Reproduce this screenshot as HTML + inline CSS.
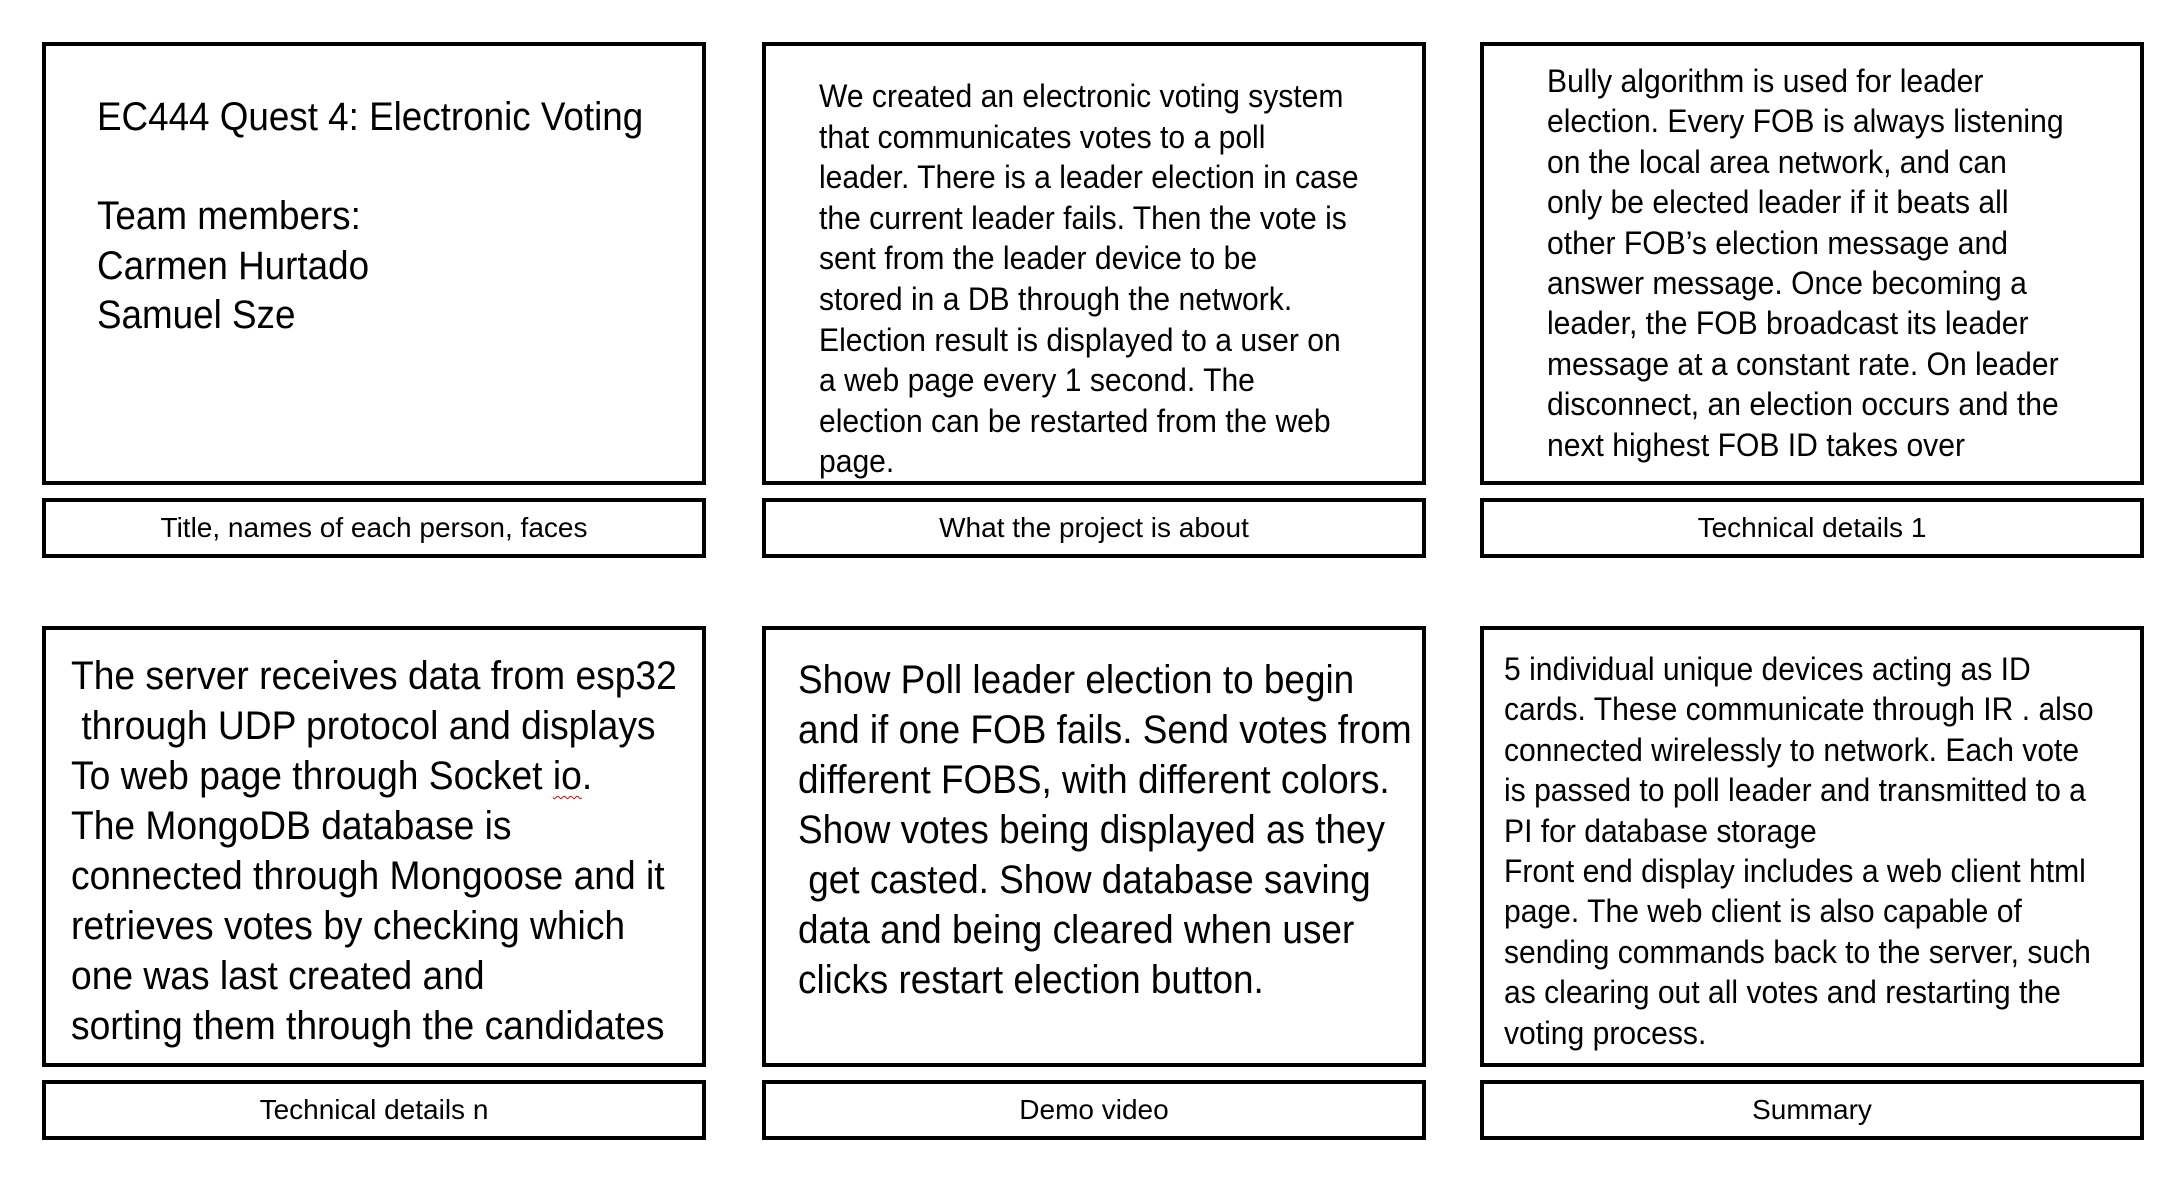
<!DOCTYPE html>
<html><head><meta charset="utf-8"><style>
html,body{margin:0;padding:0;background:#fff;}
body{width:2184px;height:1180px;position:relative;overflow:hidden;font-family:"Liberation Sans",sans-serif;color:#000;}
.b{position:absolute;border:4px solid #000;box-sizing:border-box;background:#fff;}
.t{position:absolute;white-space:pre;transform:scaleX(0.94);transform-origin:0 0;}
.l{position:absolute;text-align:center;font-size:28px;line-height:52px;}
.sq{text-decoration:underline wavy #d00;text-decoration-thickness:1px;text-underline-offset:6px;}
</style></head><body>
<div class="b" style="left:42px;top:42px;width:664px;height:443px"></div>
<div class="b" style="left:762px;top:42px;width:664px;height:443px"></div>
<div class="b" style="left:1480px;top:42px;width:664px;height:443px"></div>
<div class="b l" style="left:42px;top:498px;width:664px;height:60px">Title, names of each person, faces</div>
<div class="b l" style="left:762px;top:498px;width:664px;height:60px">What the project is about</div>
<div class="b l" style="left:1480px;top:498px;width:664px;height:60px">Technical details 1</div>

<div class="b" style="left:42px;top:626px;width:664px;height:441px"></div>
<div class="b" style="left:762px;top:626px;width:664px;height:441px"></div>
<div class="b" style="left:1480px;top:626px;width:664px;height:441px"></div>
<div class="b l" style="left:42px;top:1080px;width:664px;height:60px">Technical details n</div>
<div class="b l" style="left:762px;top:1080px;width:664px;height:60px">Demo video</div>
<div class="b l" style="left:1480px;top:1080px;width:664px;height:60px">Summary</div>

<div class="t" style="left:97px;top:92px;font-size:40px;line-height:50px;transform:scaleX(0.92)">EC444 Quest 4: Electronic Voting</div>
<div class="t" style="left:97px;top:192px;font-size:40px;line-height:49.5px;transform:scaleX(0.92)">Team members:
Carmen Hurtado
Samuel Sze</div>

<div class="t" style="left:819px;top:76px;font-size:32px;line-height:40.6px">We created an electronic voting system
that communicates votes to a poll
leader. There is a leader election in case
the current leader fails. Then the vote is
sent from the leader device to be
stored in a DB through the network.
Election result is displayed to a user on
a web page every 1 second. The
election can be restarted from the web
page.</div>

<div class="t" style="left:1547px;top:61px;font-size:32px;line-height:40.4px">Bully algorithm is used for leader
election. Every FOB is always listening
on the local area network, and can
only be elected leader if it beats all
other FOB’s election message and
answer message. Once becoming a
leader, the FOB broadcast its leader
message at a constant rate. On leader
disconnect, an election occurs and the
next highest FOB ID takes over</div>

<div class="t" style="left:71px;top:651px;font-size:40px;line-height:50px;transform:scaleX(0.93)">The server receives data from esp32
 through UDP protocol and displays
To web page through Socket <span class="sq">io</span>.
The MongoDB database is
connected through Mongoose and it
retrieves votes by checking which
one was last created and
sorting them through the candidates</div>

<div class="t" style="left:798px;top:655px;font-size:40px;line-height:50px;transform:scaleX(0.923)">Show Poll leader election to begin
and if one FOB fails. Send votes from
different FOBS, with different colors.
Show votes being displayed as they
 get casted. Show database saving
data and being cleared when user
clicks restart election button.</div>

<div class="t" style="left:1504px;top:649px;font-size:32px;line-height:40.4px">5 individual unique devices acting as ID
cards. These communicate through IR . also
connected wirelessly to network. Each vote
is passed to poll leader and transmitted to a
PI for database storage
Front end display includes a web client html
page. The web client is also capable of
sending commands back to the server, such
as clearing out all votes and restarting the
voting process.</div>
</body></html>
